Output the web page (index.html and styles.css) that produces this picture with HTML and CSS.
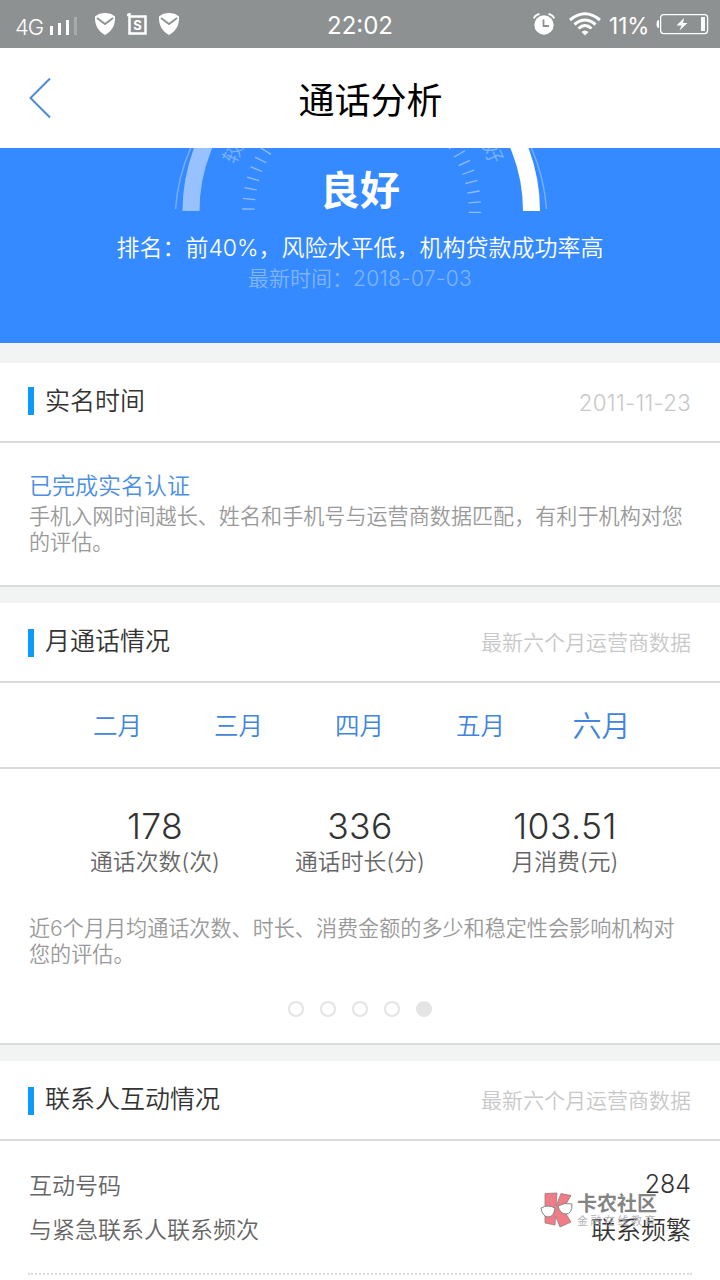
FILE: index.html
```
<!DOCTYPE html>
<html lang="zh-CN">
<head>
    <meta charset="UTF-8">
    <title>通话分析</title>
    <link rel="stylesheet" href="styles.css">
</head>
<body>
    <div class="statusbar">
        <div class="status-left">
            <span class="network">4G</span>
            <svg class="signal" width="28" height="20" viewBox="0 0 28 20">
                <path d="M1 10h3v9h-3zM9 7h3v12h-3zM17 4h3v15h-3z" fill="#fff"/>
                <path d="M25 1h3v18h-3z" fill="#a9abab"/>
            </svg>
            <svg class="shield" width="22" height="24" viewBox="0 0 22 24">
                <path d="M11 1C7 1 4 2 1 4.500C.5 11 3 19 11 23C19 19 21.500 11 21 4.500C18 2 15 1 11 1z" fill="#fff"/>
                <path d="M3 6l8 6 8-6" fill="none" stroke="#8e9191" stroke-width="1.8"/>
            </svg>
            <svg class="s-app" width="22" height="24" viewBox="0 0 22 24">
                <path d="M1 3H4M3.500 1V21.500H19.500V4.500H3.500" fill="none" stroke="#fff" stroke-width="2.500"/>
                <text x="11.500" y="17.500" text-anchor="middle">S</text>
            </svg>
            <svg class="shield" width="22" height="24" viewBox="0 0 22 24">
                <path d="M11 1C7 1 4 2 1 4.500C.5 11 3 19 11 23C19 19 21.500 11 21 4.500C18 2 15 1 11 1z" fill="#fff"/>
                <path d="M3 6l8 6 8-6" fill="none" stroke="#8e9191" stroke-width="1.8"/>
            </svg>
        </div>
        <div class="clock">22:02</div>
        <div class="status-right">
            <svg class="alarm" width="22" height="22" viewBox="0 0 22 22">
                <circle cx="11" cy="12" r="9.700" fill="#fff"/>
                <path d="M.8 5.500Q2 2 6.500 1M21.200 5.500Q20 2 15.500 1" fill="none" stroke="#fff" stroke-width="1.800"/>
                <path d="M10.500 6.500v6.500h5.500" fill="none" stroke="#8e9191" stroke-width="1.800"/>
            </svg>
            <svg class="wifi" width="32" height="24" viewBox="0 0 32 24">
                <path d="M1 8Q16-4.500 31 8M5.500 12.500Q16 3.500 26.500 12.500M9.500 16.500Q16 10.500 22.500 16.500" fill="none" stroke="#fff" stroke-width="3"/>
                <path d="M12.500 20Q16 16.800 19.500 20L16 23.500z" fill="#fff"/>
            </svg>
            <span class="percent">11%</span>
            <svg class="battery" width="53" height="22" viewBox="0 0 53 22">
                <rect x="4.600" y="1.600" width="47" height="19" rx="3" fill="none" stroke="#fff" stroke-width="1.300"/>
                <path d="M3 7Q.5 7 .5 11T3 15z" fill="#fff"/>
                <path d="M28 5L20.500 12.500H25.500L23.500 17.500L31.500 10H27z" fill="#fff"/>
                <path d="M45 4h4v14h-4z" fill="#fff"/>
            </svg>
        </div>
    </div>

    <div class="navbar">
        <svg class="back" width="24" height="42" viewBox="0 0 24 42">
            <path d="M22 1.500L2.500 21L22 40.500" fill="none" stroke="#4a8bdc" stroke-width="2"/>
        </svg>
        <h1>通话分析</h1>
    </div>

    <div class="hero">
        <!-- lower end of the score gauge -->
        <svg class="gauge" width="380" height="70" viewBox="171 148 380 70">
            <path d="M175.500 209A186 186 0 0 1 546.500 209" class="arc-line"/>
            <path d="M191 211A170.500 170.500 0 0 1 361 40.500" class="arc-done"/>
            <path d="M361 40.500A170.500 170.500 0 0 1 531.500 211" class="arc-left"/>
            <path d="M248.500 209.700A113 113 0 0 1 361 98" class="ticks"/>
            <path d="M475 213A113 113 0 0 0 361 98" class="ticks"/>
            <text transform="translate(233 153) rotate(-65)" y="7" text-anchor="middle">较</text>
            <text transform="translate(493 153) rotate(66)" y="7" text-anchor="middle">好</text>
        </svg>
        <div class="grade">良好</div>
        <div class="rank">排名：前40%，风险水平低，机构贷款成功率高</div>
        <div class="updated">最新时间：<span>2018-07-03</span></div>
    </div>

    <div class="card realname">
        <div class="card-header">
            <h2>实名时间</h2>
            <span class="note date">2011-11-23</span>
        </div>
        <div class="realname-body">
            <div class="verified">已完成实名认证</div>
            <p class="desc">手机入网时间越长、姓名和手机号与运营商数据匹配，有利于机构对您的评估。</p>
        </div>
    </div>

    <div class="card calls">
        <div class="card-header">
            <h2>月通话情况</h2>
            <span class="note">最新六个月运营商数据</span>
        </div>
        <div class="months">
            <a>二月</a>
            <a>三月</a>
            <a>四月</a>
            <a>五月</a>
            <a class="active">六月</a>
        </div>
        <div class="stats">
            <div class="stat">
                <div class="value">178</div>
                <div class="label">通话次数(次)</div>
            </div>
            <div class="stat">
                <div class="value">336</div>
                <div class="label">通话时长(分)</div>
            </div>
            <div class="stat">
                <div class="value">103.51</div>
                <div class="label">月消费(元)</div>
            </div>
        </div>
        <p class="desc">近6个月月均通话次数、时长、消费金额的多少和稳定性会影响机构对您的评估。</p>
        <div class="dots">
            <i></i><i></i><i></i><i></i><i class="on"></i>
        </div>
    </div>

    <div class="card contacts">
        <div class="card-header">
            <h2>联系人互动情况</h2>
            <span class="note">最新六个月运营商数据</span>
        </div>
        <div class="rows">
            <div class="row">
                <span>互动号码</span>
                <b>284</b>
            </div>
            <div class="row">
                <span>与紧急联系人联系频次</span>
                <b>联系频繁</b>
            </div>
        </div>
    </div>

    <div class="watermark">
        <svg width="34" height="36" viewBox="0 0 34 36">
            <path d="M5 1.500L17 1L16 14L21 1.500L31 3.500L23 17L31 30L20 35L15.500 24L15 33L5 31z" fill="#ee6f7b" stroke="#8d6d70" stroke-width=".8"/>
            <path d="M1 16Q8 12 15 16Q14 25 8 25Q2 24 1 16zM18 14Q25 10 32 12Q32 22 26 22Q20 22 18 14z" fill="#fff" stroke="#777"/>
        </svg>
        <div>
            <div class="wm-name">卡农社区</div>
            <div class="wm-sub">金融在线教育</div>
        </div>
    </div>
</body>
</html>
```
FILE: styles.css
```
* {
    margin: 0;
    padding: 0;
    box-sizing: border-box;
}

body {
    width: 720px;
    height: 1280px;
    position: relative;
    overflow: hidden;
    background: #f2f4f4;
    color: #333;
    font-family: Inter, "Noto Sans CJK SC", sans-serif;
    font-weight: 350;
}

svg {
    display: block;
    flex-shrink: 0;
}

.statusbar {
    height: 48px;
    background: #8e9191;
    color: #fff;
    display: grid;
    grid-template-columns: 1fr auto 1fr;
    align-items: center;
    padding-bottom: 2px;
}

.status-left {
    display: flex;
    align-items: center;
    padding-left: 15px;
}

.network {
    width: 28px;
    font-size: 22px;
    line-height: 40px;
    padding-top: 7px;
    letter-spacing: -1px;
}

.signal {
    margin: 4px 17px 0 6px;
}

.s-app {
    margin: 0 10px;
}

.s-app text {
    font-size: 13px;
    font-weight: 700;
    fill: #fff;
}

.clock {
    font-size: 24px;
    font-weight: 400;
    padding-top: 3px;
}

.status-right {
    display: flex;
    align-items: center;
    justify-content: flex-end;
    padding-right: 11px;
}

.wifi {
    margin: 0 8px 0 14px;
}

.percent {
    width: 42px;
    font-size: 22.5px;
    font-weight: 400;
    padding-top: 3px;
    margin-right: 5px;
}

.navbar {
    height: 100px;
    background: #fff;
    display: flex;
    align-items: center;
    padding: 0 31px 0 28px;
}

.navbar h1 {
    flex: 1;
    padding-top: 5px;
    text-align: center;
    font-size: 36px;
    font-weight: 400;
    line-height: 52px;
    color: #000;
}

.hero {
    height: 195px;
    position: relative;
    background: #368aff;
    color: #fff;
    text-align: center;
    padding-top: 15px;
}

.gauge {
    position: absolute;
    left: 171px;
    top: 0;
}

.gauge path {
    fill: none;
}

.gauge .arc-line {
    stroke: #72adff;
    stroke-width: 1.5;
}

.gauge .arc-done {
    stroke: #97c2ff;
    stroke-width: 17;
}

.gauge .arc-left {
    stroke: #fff;
    stroke-width: 17;
}

.gauge .ticks {
    stroke: #8fbeff;
    stroke-width: 12.5;
    stroke-dasharray: 1.3 8.9;
}

.gauge text {
    font-size: 20px;
    fill: #7db3ff;
}

.grade {
    font-size: 40px;
    font-weight: 700;
    line-height: 56px;
}

.rank {
    font-size: 23px;
    line-height: 32px;
    margin-top: 13px;
}

.updated {
    font-size: 21px;
    line-height: 30px;
    color: #80b5ff;
}

.updated span {
    letter-spacing: 0.3px;
}

.card {
    background: #fff;
    border-bottom: 2px solid #dadcdc;
}

.card-header {
    height: 80px;
    border-bottom: 2px solid #dadcdc;
    display: flex;
    align-items: center;
    padding: 0 29px 2px 28px;
}

.card-header h2 {
    display: flex;
    align-items: center;
    font-size: 25px;
    font-weight: 350;
    line-height: 28px;
}

.card-header h2::before {
    content: "";
    width: 6px;
    height: 28px;
    margin-right: 11px;
    background: #0c9bf8;
}

.calls h2::before,
.contacts h2::before {
    margin-top: 4px;
}

.note {
    margin-left: auto;
    font-size: 21px;
    color: #c8c8c8;
}

.date {
    font-size: 22.3px;
    letter-spacing: 0.3px;
    padding-top: 2px;
}

.desc {
    font-size: 21.1px;
    line-height: 26px;
    color: #999;
}

.realname {
    margin-top: 20px;
    height: 224px;
}

.realname-body {
    padding: 26px 29px 0;
}

.realname-body .desc {
    margin-top: 1px;
}

.verified {
    font-size: 23px;
    line-height: 34px;
    color: #4a8ee6;
}

.calls {
    margin-top: 16px;
    height: 442px;
}

.months {
    height: 86px;
    border-bottom: 2px solid #dadcdc;
    display: grid;
    grid-template-columns: repeat(5, 1fr);
    align-items: center;
    text-align: center;
    padding: 0 58px 2px 57px;
    font-size: 24.5px;
    color: #4185dc;
}

.months .active {
    font-size: 29px;
}

.stats {
    display: grid;
    grid-template-columns: repeat(3, 205px);
    justify-content: center;
    text-align: center;
    padding-top: 37px;
}

.value {
    font-size: 35.5px;
    line-height: 41px;
    letter-spacing: 0.4px;
}

.label {
    font-size: 22.8px;
    line-height: 30px;
    color: #666;
}

.calls .desc {
    padding: 39px 29px 0;
}

.dots {
    display: flex;
    justify-content: center;
    gap: 16px;
    margin-top: 33px;
}

.dots i {
    width: 16px;
    height: 16px;
    border: 2px solid #e4e4e4;
    border-radius: 50%;
}

.dots .on {
    background: #e4e4e4;
}

.contacts {
    margin-top: 16px;
    height: 240px;
    border-bottom: none;
}

.rows {
    margin: 0 28px;
    padding: 21px 1px 0;
    height: 134px;
    border-bottom: 2px dotted #dadcdc;
}

.row {
    display: flex;
    justify-content: space-between;
    align-items: center;
    height: 44px;
    font-size: 23px;
    color: #666;
}

.row b {
    font-size: 25px;
    font-weight: 350;
    color: #333;
}

.watermark {
    position: absolute;
    left: 540px;
    top: 1192px;
    display: flex;
    opacity: 0.9;
}

.watermark > div {
    margin-left: 3px;
    white-space: nowrap;
}

.wm-name {
    font-size: 20px;
    font-weight: 700;
    line-height: 24px;
    color: #777;
}

.wm-sub {
    font-size: 11px;
    font-weight: 400;
    line-height: 10px;
    letter-spacing: 2.5px;
    color: #aaa;
}
```
